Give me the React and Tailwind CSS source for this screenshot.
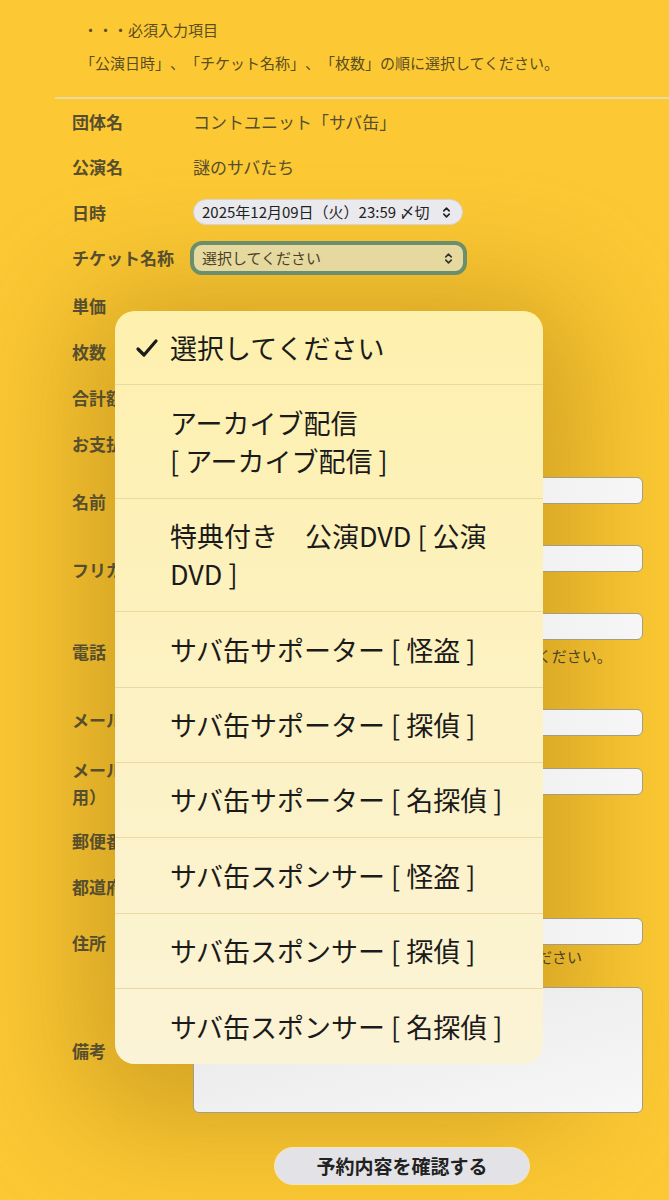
import React from 'react'
import clsx from 'clsx'
import { ChevronsUpDown } from 'lucide-react'

function Label({ children, className }) {
  return (
    <div className={clsx('w-[121px] shrink-0 text-[17px] font-bold leading-[22px] text-[#574e2d]', className)}>
      {children}
    </div>
  )
}

function Input({ className }) {
  return (
    <div className={clsx('h-[27px] rounded-[6px] border border-[#a39c86] bg-linear-to-r from-[#e2e2e2] to-[#f6f6f6]', className)} />
  )
}

const options = [
  { lines: ['アーカイブ配信', '[ アーカイブ配信 ]'], h: 'h-[114px]' },
  { lines: ['特典付き　公演DVD [ 公演', 'DVD ]'], h: 'h-[113px]' },
  { lines: ['サバ缶サポーター [ 怪盗 ]'], h: 'h-[76px]' },
  { lines: ['サバ缶サポーター [ 探偵 ]'], h: 'h-[75px]' },
  { lines: ['サバ缶サポーター [ 名探偵 ]'], h: 'h-[75px]' },
  { lines: ['サバ缶スポンサー [ 怪盗 ]'], h: 'h-[76px]' },
  { lines: ['サバ缶スポンサー [ 探偵 ]'], h: 'h-[75px]' },
  { lines: ['サバ缶スポンサー [ 名探偵 ]'], h: 'h-[75px]' },
]

export default function App() {
  return (
    <div className="relative min-h-[1200px] overflow-hidden bg-[#fcc934] font-['Noto_Sans_CJK_JP','Noto_Sans',sans-serif] text-[#574e2d] [text-spacing-trim:space-all]">
      {/* halo behind the picker, under the form */}
      <div className="absolute left-[115px] top-[311px] h-[753px] w-[428px] rounded-[20px] shadow-[0_20px_120px_40px_rgba(130,85,0,0.33)]" />

      <div className="relative">
        {/* --- NOTES --- */}
        <div className="pt-[19px] text-[15px] leading-[22px] text-[#5a4d20]">
          <p className="pl-[83px]">・・・必須入力項目</p>
          <p className="mt-[11px] pl-[80px]">「公演日時」、「チケット名称」、「枚数」の順に選択してください。</p>
        </div>
        <div className="ml-[55px] mt-[23px] h-[2px] bg-[#ead9a0]" />

        {/* --- FORM ROWS --- */}
        <div className="flex h-[46px] pl-[72px] pr-[26px]">
          <Label className="mt-[12px]">団体名</Label>
          <div className="mt-[12px] text-[17px] leading-[22px]">コントユニット「サバ缶」</div>
        </div>
        <div className="flex h-[45px] pl-[72px] pr-[26px]">
          <Label className="mt-[11px]">公演名</Label>
          <div className="mt-[11px] text-[17px] leading-[22px]">謎のサバたち</div>
        </div>
        <div className="flex h-[46px] pl-[72px] pr-[26px]">
          <Label className="mt-[12px]">日時</Label>
          <div className="mt-[9px] flex h-[26px] w-[270px] items-center justify-between rounded-full border border-[#d4d4d8] bg-[#e9e9ee] pl-[8px] pr-[9px] text-[15px] text-[#222]">
            <span>2025年12月09日（火）23:59 〆切</span>
            <ChevronsUpDown size={13} strokeWidth={3} />
          </div>
        </div>
        <div className="flex h-[46px] pl-[72px] pr-[26px]">
          <Label className="mt-[11px]">チケット名称</Label>
          <div className="-ml-[3px] mt-[5px] flex h-[34px] w-[277px] items-center justify-between rounded-[12px] border-[4px] border-[#6b8e6c] bg-[#e6d9a0] pl-[8px] pr-[8px] text-[15px] text-[#4a4224]">
            <span>選択してください</span>
            <ChevronsUpDown size={13} strokeWidth={3} className="text-[#333]" />
          </div>
        </div>
        <div className="flex h-[47px] pl-[72px] pr-[26px]">
          <Label className="mt-[13px]">単価</Label>
        </div>
        <div className="flex h-[46px] pl-[72px] pr-[26px]">
          <Label className="mt-[12px]">枚数</Label>
        </div>
        <div className="flex h-[46px] pl-[72px] pr-[26px]">
          <Label className="mt-[12px]">合計額</Label>
        </div>
        <div className="flex h-[46px] pl-[72px] pr-[26px]">
          <Label className="mt-[12px]">お支払方法</Label>
        </div>
        <div className="flex h-[67px] pl-[72px] pr-[26px]">
          <Label className="mt-[24px]">名前</Label>
          <Input className="mt-[10px] flex-1" />
        </div>
        <div className="flex h-[68px] pl-[72px] pr-[26px]">
          <Label className="mt-[25px]">フリガナ</Label>
          <Input className="mt-[11px] flex-1" />
        </div>
        <div className="flex h-[82px] pl-[72px] pr-[26px]">
          <Label className="mt-[39px]">電話</Label>
          <div className="mt-[11px] flex-1">
            <Input />
            <p className="mt-[5px] whitespace-nowrap text-[15px] leading-[22px] text-[#4a4224]">当日連絡がつく電話番号をハイフンなしで入力してください。</p>
          </div>
        </div>
        <div className="flex h-[63px] pl-[72px] pr-[26px]">
          <Label className="mt-[25px]">メールアドレス</Label>
          <Input className="mt-[25px] flex-1" />
        </div>
        <div className="flex h-[72px] pl-[72px] pr-[26px]">
          <Label className="mt-[9px] leading-[27px]">
            <span className="whitespace-nowrap">メールアドレス（確認</span>
            <br />
            用）
          </Label>
          <Input className="mt-[21px] flex-1" />
        </div>
        <div className="flex h-[46px] pl-[72px] pr-[26px]">
          <Label className="mt-[11px]">郵便番号</Label>
          <Input className="mt-[8px] w-[130px]" />
        </div>
        <div className="flex h-[44px] pl-[72px] pr-[26px]">
          <Label className="mt-[11px]">都道府県</Label>
        </div>
        <div className="flex h-[64px] pl-[72px] pr-[26px]">
          <Label className="mt-[23px]">住所</Label>
          <div className="mt-[9px] flex-1">
            <Input />
            <p className="mt-[1px] whitespace-nowrap text-[15px] leading-[22px] text-[#4a4224]">番地・建物名・部屋番号まで省略せずに入力してください</p>
          </div>
        </div>
        <div className="flex h-[174px] pl-[72px] pr-[26px]">
          <Label className="mt-[67px]">備考</Label>
          <div className="mt-[14px] h-[126px] flex-1 rounded-[6px] border border-[#a39c86] bg-linear-to-br from-[#e8e8e8] to-[#f7f7f7]" />
        </div>

        <div className="pl-[274px]">
          <button className="h-[38px] w-[256px] rounded-full border border-[#f4e7b4] bg-[#e3e3e7] text-[19px] font-bold text-[#222]">
            予約内容を確認する
          </button>
        </div>
      </div>

      {/* --- PICKER MENU --- */}
      <div className="absolute left-[115px] top-[311px] w-[428px] overflow-hidden rounded-[20px] bg-linear-to-b from-[#fef0ad] to-[#fbf3d6] text-[27px] leading-[38px] text-[#1b1b1b]">
        <div className="flex h-[74px] items-center border-b border-[#ead9a2] pl-[20px]">
          <svg className="mr-[11px] h-[20px] w-[24px]" viewBox="0 0 24 20" fill="none" stroke="#1b1b1b" strokeWidth="3.2" strokeLinecap="round" strokeLinejoin="round">
            <path d="M3 11 L9 17 L21 3" />
          </svg>
          <span>選択してください</span>
        </div>
        {options.map((opt, i) => (
          <div
            key={i}
            className={clsx('flex flex-col justify-center pl-[55px] pr-[18px]', opt.h, i < options.length - 1 && 'border-b border-[#ead9a2]')}
          >
            {opt.lines.map((l, j) => (
              <div key={j}>{l}</div>
            ))}
          </div>
        ))}
      </div>
    </div>
  )
}
